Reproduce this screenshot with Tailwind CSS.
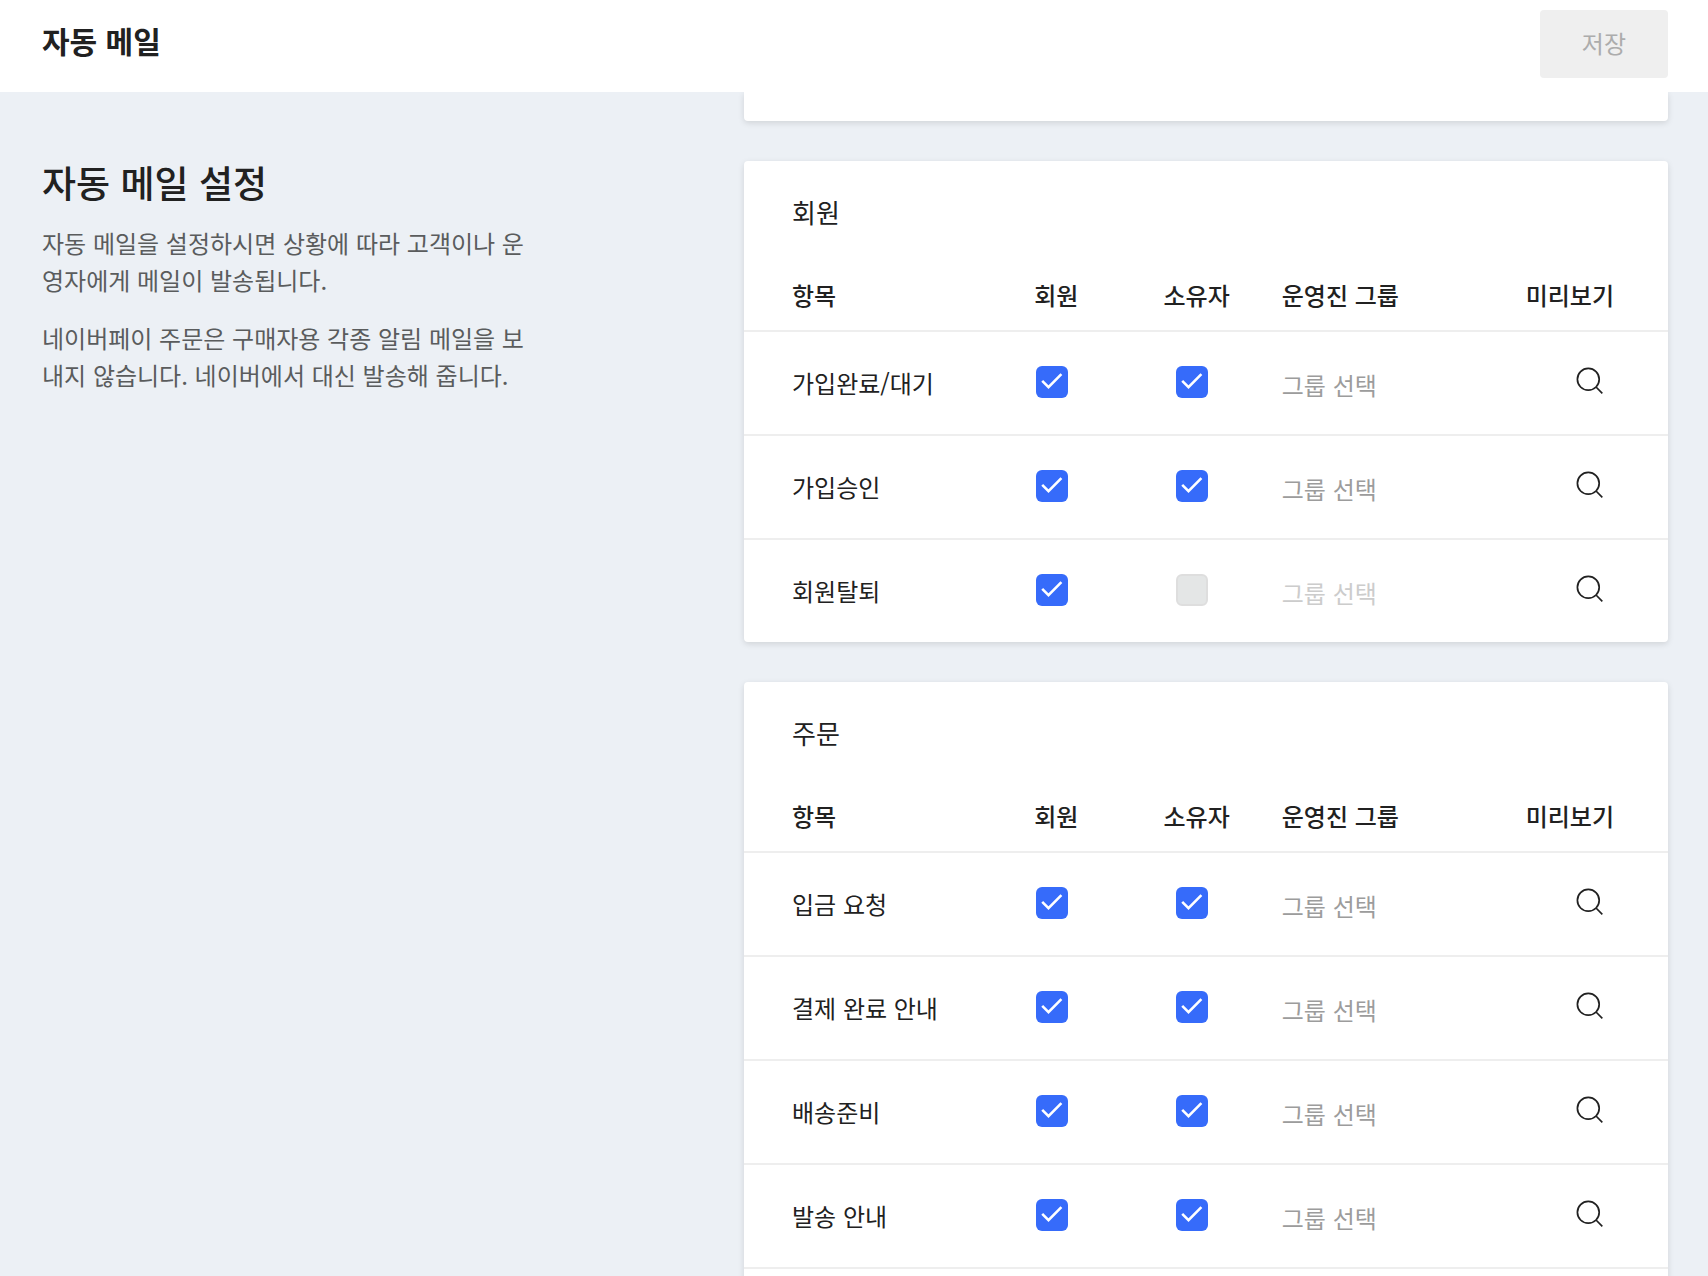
<!DOCTYPE html>
<html lang="ko">
<head>
  <meta charset="UTF-8">
  <meta name="viewport" content="width=device-width, initial-scale=1.0">
  <title>자동 메일</title>
  <script src="https://cdn.jsdelivr.net/npm/@tailwindcss/browser@4"></script>
</head>
<body class="bg-[#ecf0f5] text-[#212121] font-['Noto_Sans_CJK_KR',sans-serif]">
  <div class="h-screen flex flex-col overflow-hidden">
    <!-- Header -->
    <header class="relative z-10 shrink-0 bg-white flex items-start justify-between pl-[42px] pr-10 pt-[10px] pb-[14px]">
      <h1 class="text-[30px] leading-[60px] font-bold">자동 메일</h1>
      <button type="button" disabled class="h-[68px] px-[42px] pb-[2px] rounded bg-[#efefef] text-2xl text-[#acacac]">저장</button>
    </header>

    <!-- Main Content -->
    <main class="flex-1 min-h-0 grid grid-cols-[702fr_924fr] pl-[42px] pr-10">
      <!-- Left Column: Description -->
      <section class="pt-[66px]">
        <h2 class="text-[37px] leading-[48px] font-medium mb-[18px]">자동 메일 설정</h2>
        <div class="max-w-[500px] text-2xl leading-[37px] text-[#5a5c5d] space-y-[21px]">
          <p>자동 메일을 설정하시면 상황에 따라 고객이나 운영자에게 메일이 발송됩니다.</p>
          <p>네이버페이 주문은 구매자용 각종 알림 메일을 보내지 않습니다. 네이버에서 대신 발송해 줍니다.</p>
        </div>
      </section>

      <!-- Right Column: Mail Tables -->
      <div id="cards" class="flex flex-col gap-10">
        <div class="shrink-0 h-[29px] bg-white rounded-b shadow-[0_2px_6px_rgba(0,0,0,0.12)]"></div>
      </div>
    </main>
  </div>

  <script>
    const groups = [
      { title: '회원', rows: [['가입완료/대기'], ['가입승인'], ['회원탈퇴', true]] },
      { title: '주문', rows: [['입금 요청'], ['결제 완료 안내'], ['배송준비'], ['발송 안내'], ['']] },
    ];

    const checkbox = (label, disabled) => `
      <label class="grid size-8">
        <input type="checkbox" aria-label="${label}" ${disabled ? 'disabled' : 'checked'} class="col-start-1 row-start-1 appearance-none size-8 rounded-md bg-[#366bfa] disabled:bg-[#e4e6e6] disabled:border-2 disabled:border-[#dedede]">
        ${disabled ? '' : `<svg class="col-start-1 row-start-1 size-8 pointer-events-none" viewBox="0 0 32 32" fill="none" stroke="#fff" stroke-width="2.6"><path d="M6.2 14.9l6.3 6.2L25.4 8.2" /></svg>`}
      </label>`;

    const row = ([name, disabled]) => name === '' ? '<tr class="h-[104px]"><td colspan="5"></td></tr>' : `
      <tr class="h-[104px] last:h-[103px] border-b-2 border-[#eeeeee] last:border-b-0">
        <td class="pl-12">${name}</td>
        <td class="pl-[2px] pb-[2px]">${checkbox('회원', false)}</td>
        <td class="pl-[13px] pb-[2px]">${checkbox('소유자', disabled)}</td>
        <td class="pt-[2px]"><input type="text" placeholder="그룹 선택" aria-label="운영진 그룹" ${disabled ? 'disabled' : ''} class="block w-full h-9 bg-transparent placeholder:text-[#9c9c9c] disabled:placeholder:text-[#cccccc]"></td>
        <td class="pr-16">
          <button type="button" aria-label="미리보기" class="block ml-auto mb-1">
            <svg class="size-7" viewBox="0 0 28 28" fill="none" stroke="#212121" stroke-width="1.7"><circle cx="12.3" cy="12.3" r="10.9" /><path d="M20 20l6.3 6.3" /></svg>
          </button>
        </td>
      </tr>`;

    document.getElementById('cards').insertAdjacentHTML('beforeend', groups.map(g => `
      <section class="shrink-0 bg-white rounded shadow-[0_2px_6px_rgba(0,0,0,0.12)]">
        <h3 class="px-12 pt-[31px] pb-7 text-[26px] leading-10">${g.title}</h3>
        <table class="w-full table-fixed text-2xl text-left">
          <colgroup><col class="w-[31.4%]"><col class="w-[14%]"><col class="w-[12.8%]"><col><col class="w-[22%]"></colgroup>
          <thead>
            <tr class="h-[71px] border-b-2 border-[#eeeeee]">
              <th class="pl-12 font-medium">항목</th>
              <th class="font-medium">회원</th>
              <th class="font-medium">소유자</th>
              <th class="font-medium">운영진 그룹</th>
              <th class="pr-[54px] font-medium text-right">미리보기</th>
            </tr>
          </thead>
          <tbody>${g.rows.map(row).join('')}</tbody>
        </table>
      </section>`).join(''));
  </script>
</body>
</html>
